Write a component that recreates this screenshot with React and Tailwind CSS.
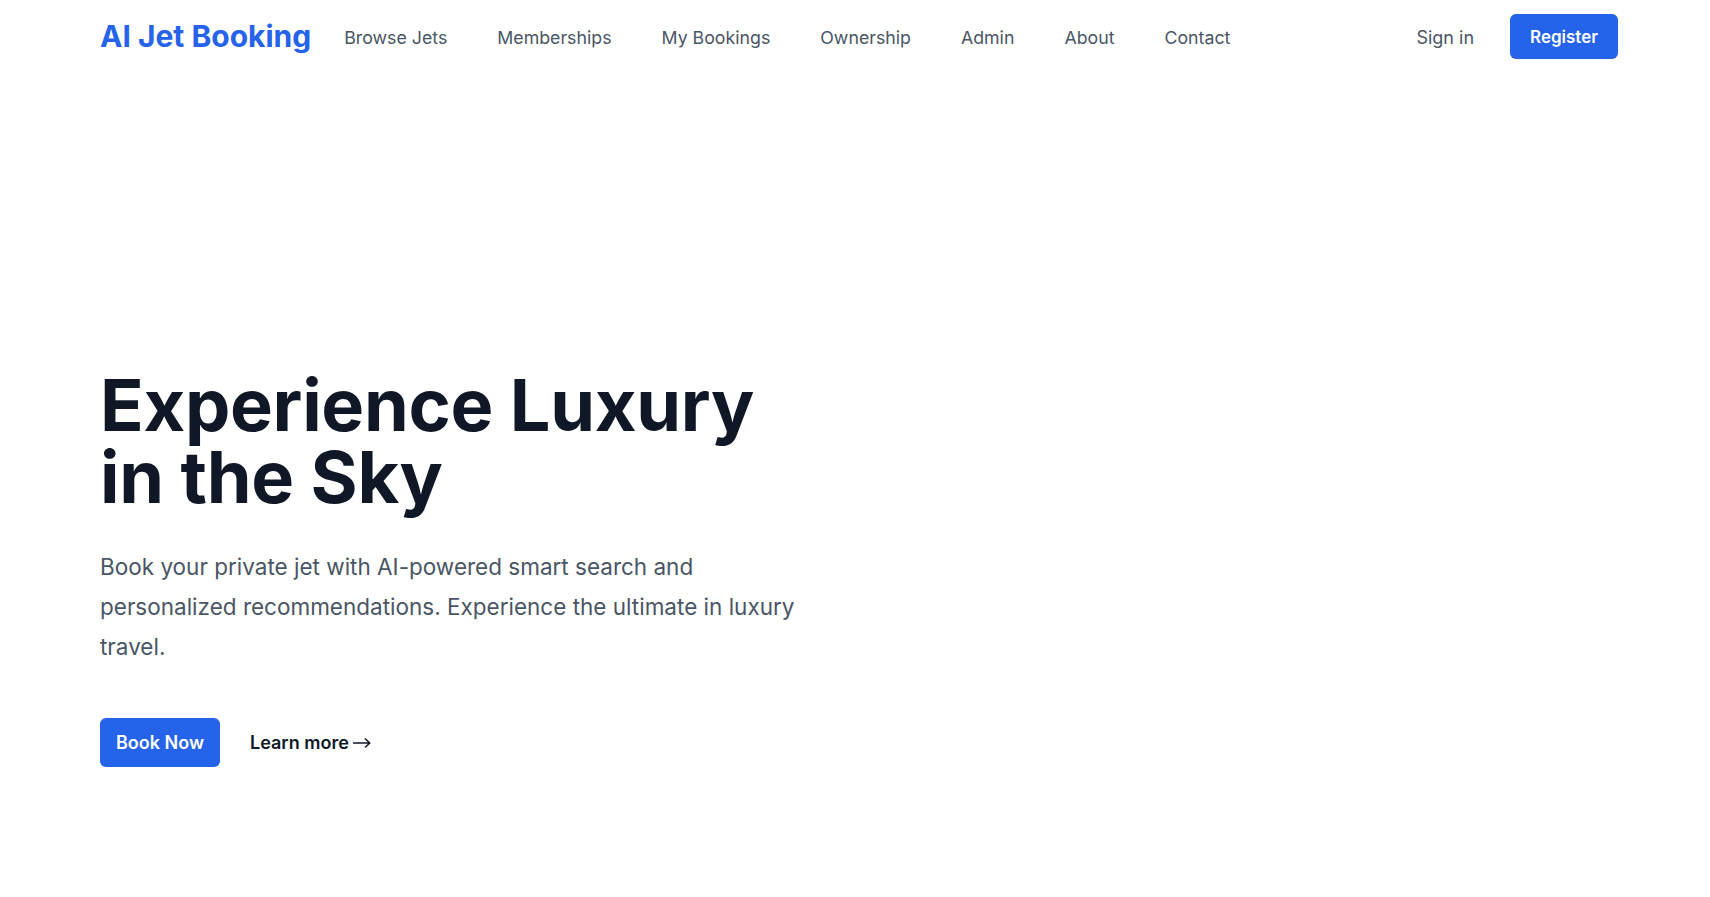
import React from "react";

export default function App() {
  const links = ["Browse Jets", "Memberships", "My Bookings", "Ownership", "Admin", "About", "Contact"];
  return (
    <div className="min-h-screen bg-white font-['Inter',_'Liberation_Sans',_sans-serif] antialiased">
      <header className="flex items-center justify-between pl-[100px] pr-[92px] h-[72px]">
        <div className="flex items-center">
          <a className="text-3xl font-bold text-[#2563eb]">AI Jet Booking</a>
          <nav className="ml-[33px] mt-1 flex items-center gap-[50px]">
            {links.map((l) => (
              <a key={l} className="text-[17.75px] leading-7 font-normal text-gray-600">
                {l}
              </a>
            ))}
          </nav>
        </div>
        <div className="flex items-center gap-9">
          <a className="mt-1 text-lg leading-7 font-normal text-gray-600">Sign in</a>
          <button className="rounded-md bg-[#2563eb] px-5 pt-[11px] pb-[10px] text-[17px] leading-6 font-semibold text-white">
            Register
          </button>
        </div>
      </header>

      <main className="pl-[100px] pr-[92px] pt-[297px]">
        <div className="grid grid-cols-[715px_1fr]">
          <div>
            <h1 className="text-7xl font-bold leading-none tracking-[-0.3px] text-gray-900">
              Experience Luxury in the Sky
            </h1>
            <p className="mt-[34px] text-[22.5px] leading-10 text-gray-600">
              Book your private jet with AI-powered smart search and personalized recommendations. Experience the
              ultimate in luxury travel.
            </p>
            <div className="mt-[51px] flex items-center gap-[30px]">
              <button className="rounded-md bg-[#2563eb] px-4 h-[49px] text-lg font-semibold text-white">
                Book Now
              </button>
              <a className="flex items-center gap-1 text-lg font-semibold text-gray-900">
                Learn more
                <svg width="18" height="10" viewBox="0 0 18 10" fill="none" aria-hidden="true">
                  <path d="M0.5 5H16.5M12.5 1L16.8 5L12.5 9" stroke="currentColor" strokeWidth="1.6" strokeLinecap="round" strokeLinejoin="round" />
                </svg>
              </a>
            </div>
          </div>
          <div></div>
        </div>
      </main>
    </div>
  );
}
